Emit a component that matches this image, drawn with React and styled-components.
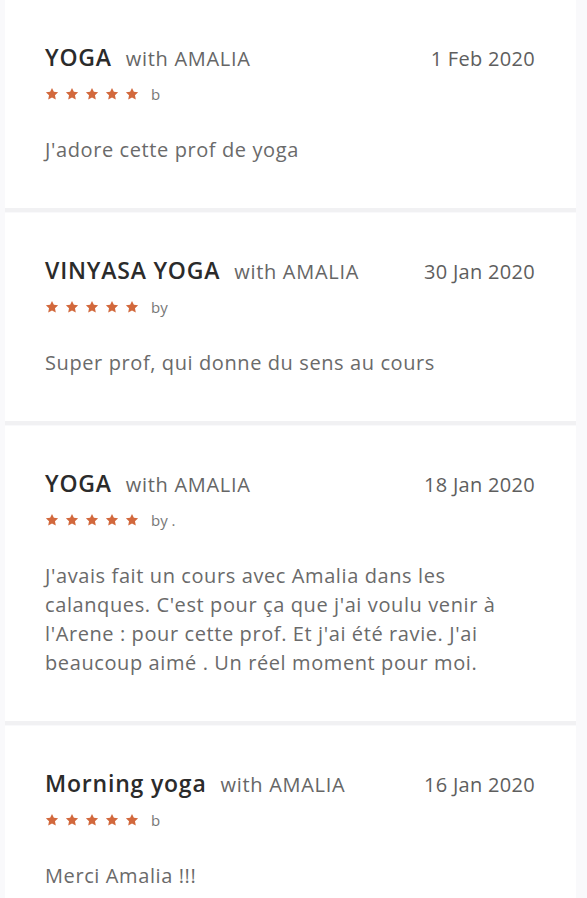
import React from "react";
import styled, { createGlobalStyle } from "styled-components";

const reviews = [
  {
    course: "YOGA",
    teacher: "AMALIA",
    date: "1 Feb 2020",
    by: "b",
    text: "J'adore cette prof de yoga",
  },
  {
    course: "VINYASA YOGA",
    teacher: "AMALIA",
    date: "30 Jan 2020",
    by: "by",
    text: "Super prof, qui donne du sens au cours",
  },
  {
    course: "YOGA",
    teacher: "AMALIA",
    date: "18 Jan 2020",
    by: "by .",
    text: "J'avais fait un cours avec Amalia dans les calanques. C'est pour ça que j'ai voulu venir à l'Arene : pour cette prof. Et j'ai été ravie. J'ai beaucoup aimé . Un réel moment pour moi.",
  },
  {
    course: "Morning yoga",
    teacher: "AMALIA",
    date: "16 Jan 2020",
    by: "b",
    text: "Merci Amalia !!!",
  },
];

const Star = () => (
  <svg width="14" height="14" viewBox="0 0 24 24">
    <path
      d="M12 1.5l3.2 6.7 7.3.9-5.4 5.1 1.4 7.3L12 18l-6.5 3.5 1.4-7.3-5.4-5.1 7.3-.9z"
      fill="#d2683c"
    />
  </svg>
);

const App = () => {
  return (
    <>
      <GlobalStyle />
      <List>
        {reviews.map((r, i) => (
          <Card key={i}>
            <Header>
              <Course>{r.course}</Course>
              <Teacher>with {r.teacher}</Teacher>
              <ReviewDate>{r.date}</ReviewDate>
            </Header>
            <RatingRow>
              <Stars>
                {[0, 1, 2, 3, 4].map((s) => (
                  <Star key={s} />
                ))}
              </Stars>
              <Author>{r.by}</Author>
            </RatingRow>
            <Body>{r.text}</Body>
          </Card>
        ))}
      </List>
    </>
  );
};

const GlobalStyle = createGlobalStyle`
  body {
    margin: 0;
    background: #f9f9fb;
    font-family: "Open Sans", Lato, sans-serif;
    overflow: hidden;
  }
`;

const List = styled.div`
  display: flex;
  flex-direction: column;
  width: 571px;
  height: 898px;
  overflow: hidden;
  margin-left: 5px;
`;

const Card = styled.div`
  flex-shrink: 0;
  background: #ffffff;
  padding: 42px 41px 44px 40px;
  border-bottom: 4px solid #f1f1f3;
  margin-bottom: 1px;
`;

const Header = styled.div`
  display: flex;
  align-items: baseline;
  line-height: 30px;
`;

const Course = styled.span`
  font-size: 23px;
  font-weight: 600;
  letter-spacing: 0.8px;
  color: #2b2b2b;
`;

const Teacher = styled.span`
  margin-left: 14px;
  font-size: 20px;
  letter-spacing: 0.7px;
  color: #666666;
`;

const ReviewDate = styled.span`
  margin-left: auto;
  font-size: 20px;
  letter-spacing: 0.3px;
  color: #5e5e5e;
`;

const RatingRow = styled.div`
  display: flex;
  align-items: center;
  height: 16px;
  margin-top: 12px;
`;

const Stars = styled.div`
  display: flex;
  gap: 6px;
`;

const Author = styled.span`
  margin-left: 12px;
  font-size: 15px;
  color: #777777;
`;

const Body = styled.p`
  margin: 33px 0 0;
  max-width: 462px;
  font-size: 20px;
  letter-spacing: 0.6px;
  line-height: 29px;
  color: #6a6a6a;
`;

export default App;
